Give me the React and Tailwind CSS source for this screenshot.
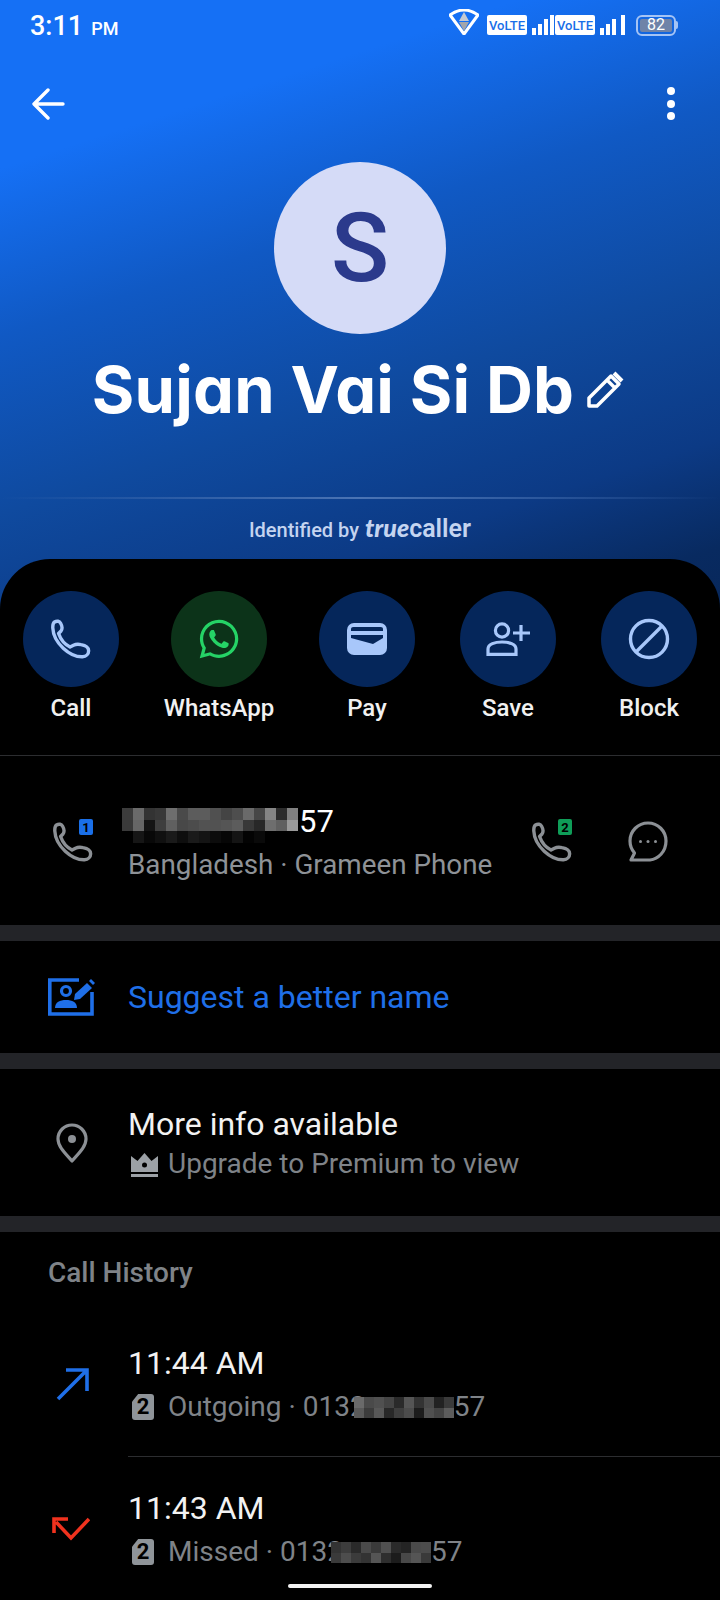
import React from 'react';
import { FaWhatsapp } from 'react-icons/fa';

const roboto = "font-['Roboto',sans-serif]";

// colour rows for the pixelated number blocks
const mosaicTop = [
  ['#3c3c3c', '#6a6a6a', '#333333', '#383838', '#6e6e6e', '#4a4a4a', '#5c5c5c', '#5c5c5c', '#505050', '#444444', '#4e4e4e', '#6a6a6a', '#474747', '#858585', '#2c2c2c', '#808080'],
  ['#3a3a3a', '#666666', '#141414', '#3e3e3e', '#606060', '#484848', '#4c4c4c', '#525252', '#525252', '#555555', '#5c5c5c', '#383838', '#282828', '#6e6e6e', '#606060', '#9a9a9a'],
  ['#000000', '#161616', '#080808', '#101010', '#1a1a1a', '#0e0e0e', '#1a1a1a', '#141414', '#0c0c0c', '#060606', '#141414', '#030303', '#0a0a0a', '#000000', '#000000', '#000000'],
];
const mosaicOut = [
  ['#6a6a6a', '#4a4a4a', '#505050', '#444444', '#2a2a2a', '#555555', '#333333', '#4a4a4a', '#222222', '#3a3a3a'],
  ['#5a5a5a', '#3c3c3c', '#585858', '#282828', '#3e3e3e', '#4c4c4c', '#1c1c1c', '#505050', '#444444', '#5c5c5c'],
];
const mosaicMissed = [
  ['#333333', '#3d3d3d', '#2a2a2a', '#4a4a4a', '#3a3a3a', '#505050', '#2a2a2a', '#242424', '#4a4a4a', '#4c4c4c'],
  ['#3a3a3a', '#4d4d4d', '#3b3b3b', '#333333', '#555555', '#2e2e2e', '#1c1c1c', '#484848', '#555555', '#3a3a3a'],
];

function Mosaic({ rows, cell, rowH, className }) {
  const w = rows[0].length * cell;
  const h = rows.length * rowH;
  return (
    <svg width={w} height={h} viewBox={`0 0 ${w} ${h}`} className={className} shapeRendering="crispEdges">
      {rows.map((row, y) =>
        row.map((c, x) => <rect key={`${x}-${y}`} x={x * cell} y={y * rowH} width={cell} height={rowH} fill={c} />)
      )}
    </svg>
  );
}

function PhoneIcon({ color, className }) {
  return (
    <svg viewBox="0 0 40 40" className={className} fill="none" stroke={color} strokeWidth="3.4" strokeLinejoin="round" strokeLinecap="round">
      <path d="M3.5 3 C6 1.5 8.5 2.2 9.5 4 C11.5 7.5 11.5 10 10 12 L7.6 14.5 C9.5 20 14 25.5 19 28 L22.5 26.2 C25 25 27 25 30 25.6 C34 26.3 37.5 28.5 37.6 31.5 C37.8 35 35 37.6 31.5 37.8 C19 38.2 2.5 24 1.8 9 C1.7 6.5 2 4 3.5 3 Z" />
    </svg>
  );
}

function SimBadge({ n, bg }) {
  return (
    <span className={`absolute right-0 top-[-3px] flex h-[16px] w-[14px] items-center justify-center rounded-[2px] text-[13px] font-bold leading-none text-black ${roboto} ${bg}`}>
      {n}
    </span>
  );
}

function SimChip() {
  return (
    <span className={`flex h-[26px] w-[22px] shrink-0 items-center justify-center rounded-[3px] bg-[#8f9499] text-[22px] font-bold leading-none text-black [clip-path:polygon(28%_0,100%_0,100%_100%,0_100%,0_30%)] ${roboto}`}>
      2
    </span>
  );
}

function ActionButton({ label, bg, children }) {
  return (
    <div className="flex w-[96px] flex-col items-center">
      <div className={`flex h-[96px] w-[96px] items-center justify-center rounded-full ${bg}`}>{children}</div>
      <span className={`mt-[7px] whitespace-nowrap text-[24px] font-medium leading-[28px] text-[#f1f1f1] ${roboto}`}>{label}</span>
    </div>
  );
}

function Signal({ bars }) {
  return (
    <div className="flex h-[20px] items-end gap-[2px]">
      {bars.map((h, i) => (
        <span key={i} className="w-[4px] bg-white" style={{ height: h }} />
      ))}
    </div>
  );
}

function Volte() {
  return (
    <span className={`flex h-[20px] w-[40px] items-center justify-center rounded-[2px] bg-white text-[13px] font-medium leading-none text-[#1a6fe8] ${roboto}`}>
      VoLTE
    </span>
  );
}

function StatusBar() {
  return (
    <div className={`flex h-[50px] items-start justify-between pl-[30px] pr-[42px] text-white ${roboto}`}>
      <div className="mt-[10px] flex items-baseline font-medium">
        <span className="text-[27px] leading-[32px]">3:11</span>
        <span className="ml-[8px] text-[18px] leading-[32px]">PM</span>
      </div>
      <div className="mt-[9px] flex items-center">
        <svg width="30" height="26" viewBox="0 0 30 26" className="mb-[1px]">
          <path d="M15 1 C20 1 25 3 29 6 L15 25 L1 6 C5 3 10 1 15 1 Z" fill="none" stroke="#fff" strokeWidth="3" strokeLinejoin="round" />
          <path d="M15 3 L20 12 L10 12 Z" fill="#c4c9d2" />
          <path d="M10 13 L20 13 L15 22 Z" fill="#a3a6ab" />
        </svg>
        <div className="ml-[8px] mt-[5px] flex items-center gap-[5px]">
          <Volte />
          <Signal bars={[7, 11, 16, 20]} />
        </div>
        <div className="ml-[1px] mt-[5px] flex items-center gap-[5px]">
          <Volte />
          <Signal bars={[7, 11, 16]} />
          <span className="h-[20px] w-[4px] bg-white" />
        </div>
        <div className="ml-[11px] mt-[5px] flex items-center">
          <div className="flex h-[21px] w-[40px] items-center rounded-[6px] border-2 border-[#a5c4f5] p-[2px]">
            <span className="flex h-full w-[32px] items-center justify-center rounded-[2px] bg-[#6f83a8] text-[16px] leading-none text-white">82</span>
          </div>
          <span className="h-[8px] w-[2px] rounded-r bg-[#a5c4f5]" />
        </div>
      </div>
    </div>
  );
}

function Header() {
  return (
    <div>
      <StatusBar />
      <div className="mt-[37px] flex items-center justify-between pl-[32px] pr-[45px]">
        <svg width="33" height="32" viewBox="0 0 33 32" fill="none" stroke="#fff" strokeWidth="3.4" strokeLinecap="round" strokeLinejoin="round">
          <path d="M16 2 L2 16 L16 30 M3 16 L31 16" />
        </svg>
        <div className="flex flex-col gap-[4.5px]">
          <span className="h-[8px] w-[8px] rounded-full bg-white" />
          <span className="h-[8px] w-[8px] rounded-full bg-white" />
          <span className="h-[8px] w-[8px] rounded-full bg-white" />
        </div>
      </div>
      <div className={`mx-auto mt-[42px] flex h-[172px] w-[172px] items-center justify-center rounded-full bg-[#d5dbf7] text-[96px] font-medium leading-none text-[#2b3a8c] ${roboto}`}>
        S
      </div>
      <div className="mt-[20px] flex h-[70px] items-center justify-center pr-[4px]">
        <span className="whitespace-nowrap font-['Inter',sans-serif] text-[65px] font-bold leading-none tracking-[0.2px] text-white [font-feature-settings:'cv11']">
          Sujan Vai Si Db
        </span>
        <svg width="38" height="38" viewBox="0 0 38 38" className="ml-[12px] mt-[1px]" fill="none" stroke="#fff" strokeWidth="3.5" strokeLinejoin="round">
          <path d="M3 35 L3 27 L25 5 L33 13 L11 35 Z M21 9 L29 17" />
          <path d="M28 2 L36 10" strokeWidth="4" />
        </svg>
      </div>
      <div className="mt-[73px] h-[2px] bg-gradient-to-r from-transparent via-[#4b74b4] to-transparent" />
      <div className="mt-[14px] flex h-[34px] items-center justify-center text-[#c4d4f0]">
        <span className={`text-[20px] font-medium leading-none ${roboto}`}>Identified by</span>
        <span className="ml-[6px] mb-[5px] flex items-baseline text-[25px] leading-none">
          <span className="font-['Lato',sans-serif] font-black italic">true</span>
          <span className={`font-semibold ${roboto}`}>caller</span>
        </span>
      </div>
    </div>
  );
}

function Actions() {
  return (
    <div className="mt-[12px] flex h-[196px] gap-[52px] rounded-t-[50px] bg-black pl-[23px] pt-[32px]">
      <ActionButton label="Call" bg="bg-[#05265a]">
        <PhoneIcon color="#a8c7fa" className="h-[40px] w-[40px]" />
      </ActionButton>
      <ActionButton label="WhatsApp" bg="bg-[#0c3319]">
        <FaWhatsapp className="h-[44px] w-[44px] text-[#25d366]" />
      </ActionButton>
      <ActionButton label="Pay" bg="bg-[#05265a]">
        <svg width="40" height="32" viewBox="0 0 40 32">
          <rect width="40" height="32" rx="7" fill="#a8c7fa" />
          <path d="M4 6 C4 4 6 4 8 4 L32 4 C34 4 36 4 36 6 L36 8 L4 8 Z" fill="#05265a" />
          <path d="M4 12 L36 12 L36 15 L26 21 L4 15 Z" fill="#05265a" />
        </svg>
      </ActionButton>
      <div className="-ml-[7px]">
        <ActionButton label="Save" bg="bg-[#05265a]">
          <svg width="44" height="34" viewBox="0 0 44 34" fill="none" stroke="#a8c7fa" strokeWidth="3.2" strokeLinecap="butt">
            <circle cx="16" cy="8.5" r="6.6" />
            <path d="M2 32.4 L2 27 C2 22 9 20 16 20 C23 20 30 22 30 27 L30 32.4 Z" />
            <path d="M35 3 L35 19 M27 11 L44 11" />
          </svg>
        </ActionButton>
      </div>
      <div className="-ml-[7px]">
        <ActionButton label="Block" bg="bg-[#05265a]">
          <svg width="42" height="42" viewBox="0 0 42 42" fill="none" stroke="#a8c7fa" strokeWidth="3.4">
            <circle cx="21" cy="21" r="18.5" />
            <path d="M8 34 L34 8" />
          </svg>
        </ActionButton>
      </div>
    </div>
  );
}

function Separator() {
  return <div className="h-[16px] bg-[#232428]" />;
}

function PhoneSection() {
  return (
    <div className={`relative h-[170px] border-t border-[#2c2d30] ${roboto}`}>
      <div className="flex pl-[53px] pt-[66px]">
        <div className="relative h-[40px] w-[40px] shrink-0">
          <PhoneIcon color="#8c9095" className="h-[40px] w-[40px]" />
          <SimBadge n="1" bg="bg-[#1a6fe8]" />
        </div>
        <div className="ml-[35px] mt-[-22px] w-[390px] shrink-0">
          <div className="flex items-start">
            <Mosaic rows={mosaicTop} cell={11} rowH={11.5} className="-ml-[6px] mt-[8px]" />
            <span className="ml-[1px] text-[31px] leading-[44px] text-white">57</span>
          </div>
          <p className="mt-[1px] text-[27.8px] leading-[40px] text-[#8e9297]">Bangladesh · Grameen Phone</p>
        </div>
        <div className="relative ml-[14px] h-[40px] w-[40px] shrink-0">
          <PhoneIcon color="#8c9095" className="h-[40px] w-[40px]" />
          <SimBadge n="2" bg="bg-[#0f9d58]" />
        </div>
        <svg width="40" height="41" viewBox="0 0 40 41" className="ml-[56px] mt-[-1px] shrink-0" fill="none" stroke="#8c9095" strokeWidth="3.2" strokeLinejoin="round">
          <path d="M20 2 C30 2 38 10 38 20 C38 31 30 38 22 39 L3 39 L6.5 32 C3.5 28.5 2 24.5 2 20 C2 10 10 2 20 2 Z" />
          <circle cx="12.5" cy="20.5" r="1.5" fill="#8c9095" stroke="none" />
          <circle cx="20" cy="20.5" r="1.5" fill="#8c9095" stroke="none" />
          <circle cx="27.5" cy="20.5" r="1.5" fill="#8c9095" stroke="none" />
        </svg>
      </div>
    </div>
  );
}

function SuggestRow() {
  return (
    <div className={`flex h-[112px] items-center pl-[48px] ${roboto}`}>
      <svg width="47" height="38" viewBox="0 0 47 38" className="shrink-0" fill="none">
        <path d="M31 2 L1.8 2 L1.8 36 L44 36 L44 14" stroke="#1f6fe8" strokeWidth="3.6" />
        <circle cx="18" cy="13" r="4.5" stroke="#1f6fe8" strokeWidth="3.2" />
        <path d="M7 30 C7 24 12 22 18 22 C24 22 29 24 29 30 Z" fill="#1f6fe8" />
        <path d="M26 22 L27 16 L39 5 L44 10 L32 21 Z" fill="#1f6fe8" />
        <path d="M41 3 L43 1 L47 5 L45 7 Z" fill="#1f6fe8" />
      </svg>
      <span className="ml-[33px] text-[32px] leading-none text-[#1f6fe8]">Suggest a better name</span>
    </div>
  );
}

function MoreInfo() {
  return (
    <div className={`flex h-[147px] items-center pl-[56px] ${roboto}`}>
      <svg width="32" height="40" viewBox="0 0 32 40" className="shrink-0" fill="none">
        <path d="M16 38 C10 31 2 24 2 16 C2 8 8.5 2 16 2 C23.5 2 30 8 30 16 C30 24 22 31 16 38 Z" stroke="#8c9095" strokeWidth="3.2" strokeLinejoin="round" />
        <circle cx="16" cy="16" r="4" fill="#8c9095" />
      </svg>
      <div className="ml-[40px] mt-[2px]">
        <p className="text-[32px] leading-[40px] text-[#f2f2f2]">More info available</p>
        <div className="flex items-center">
          <svg width="27" height="24" viewBox="0 0 27 24" className="ml-[3px] mt-[2px] shrink-0">
            <path d="M0 3 L6.5 8 L13.5 0 L20.5 8 L27 3 L27 19 L0 19 Z" fill="#9ca1a6" />
            <circle cx="13.5" cy="12" r="2.5" fill="#000" />
            <rect y="21" width="27" height="3" fill="#9ca1a6" />
          </svg>
          <span className="ml-[10px] text-[28px] leading-[40px] text-[#7f8388]">Upgrade to Premium to view</span>
        </div>
      </div>
    </div>
  );
}

function HistoryRow({ time, type, rows, icon, iconPad, divider }) {
  return (
    <div className="flex">
      <div className={`w-[128px] shrink-0 pt-[23px] ${iconPad}`}>{icon}</div>
      <div className={`flex-1 pb-[30px] ${divider ? 'border-b border-[#2c2d30]' : ''}`}>
        <p className="text-[32px] leading-[38px] text-[#f2f2f2]">{time}</p>
        <div className="mt-[6px] flex items-center pl-[4px]">
          <SimChip />
          <span className="ml-[14px] whitespace-nowrap text-[28px] leading-[38px] text-[#7f8388]">{type} · 0132</span>
          <Mosaic rows={rows} cell={10} rowH={10.5} className="-ml-[12px]" />
          <span className="text-[28px] leading-[38px] text-[#7f8388]">57</span>
        </div>
      </div>
    </div>
  );
}

function CallHistory() {
  return (
    <div className={roboto}>
      <p className="pl-[48px] pt-[23px] text-[28px] font-medium leading-[36px] text-[#7f8388]">Call History</p>
      <div className="mt-[53px] flex flex-col">
        <HistoryRow
          time="11:44 AM"
          type="Outgoing"
          rows={mosaicOut}
          divider
          iconPad="pl-[56px]"
          icon={
            <svg width="34" height="34" viewBox="0 0 34 34" fill="none" stroke="#1f6fe8" strokeWidth="3.6">
              <path d="M2 32 L30 4 M10 3 L31 3 L31 24" />
            </svg>
          }
        />
        <div className="pt-[32px]">
          <HistoryRow
            time="11:43 AM"
            type="Missed"
            rows={mosaicMissed}
            iconPad="pl-[52px]"
            icon={
              <svg width="38" height="24" viewBox="0 0 38 24" className="mt-[5px]" fill="none" stroke="#f0321e" strokeWidth="3.6">
                <path d="M37 2 L19 21 L4 5 M2 16 L2 2 L16 2" />
              </svg>
            }
          />
        </div>
      </div>
    </div>
  );
}

export default function App() {
  return (
    <div className="relative h-[1600px] w-[720px] overflow-hidden bg-black">
      <div className="bg-[linear-gradient(162deg,#1570f5_0%,#1570f5_17%,#1059c4_34%,#0f4a9f_52%,#0c3a85_68%,#082a60_79%,#06224f_100%)]">
        <Header />
        <Actions />
      </div>
      <PhoneSection />
      <Separator />
      <SuggestRow />
      <Separator />
      <MoreInfo />
      <Separator />
      <CallHistory />
      <div className="absolute bottom-[12px] left-[288px] h-[4px] w-[144px] rounded-full bg-[#f2f2f2]" />
    </div>
  );
}
